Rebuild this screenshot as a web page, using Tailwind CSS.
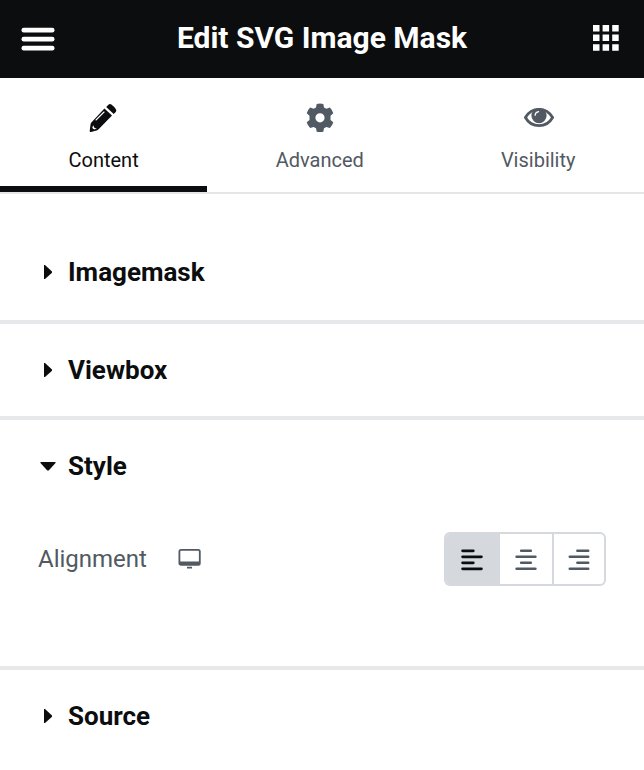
<!DOCTYPE html>
<html lang="en">
<head>
<meta charset="utf-8">
<meta name="viewport" content="width=device-width, initial-scale=1">
<title>Edit SVG Image Mask</title>
<script src="https://cdn.jsdelivr.net/npm/@tailwindcss/browser@4"></script>
</head>
<body class="bg-white font-[Roboto,sans-serif] text-[#0c0d0e]">
<header class="flex h-[78px] items-center justify-between bg-[#0c0d0e] px-5 text-white">
  <button type="button" aria-label="Menu" class="w-9">
    <svg class="block h-9 w-9" viewBox="0 0 36 36" fill="currentColor"><rect x="1.5" y="6.8" width="33" height="4.6" rx="2.2"/><rect x="1.5" y="15.8" width="33" height="4.6" rx="2.2"/><rect x="1.5" y="24.8" width="33" height="4.6" rx="2.2"/></svg>
  </button>
  <h1 class="pb-0.5 text-[30px] leading-9 font-bold">Edit SVG Image Mask</h1>
  <button type="button" aria-label="Widgets" class="w-9">
    <svg class="block h-9 w-9" viewBox="0 0 36 36" fill="currentColor"><path d="M5 4h6.5v6.5H5zM14.6 4h6.5v6.5h-6.5zM24.2 4h6.5v6.5h-6.5zM5 13.6h6.5v6.5H5zM14.6 13.6h6.5v6.5h-6.5zM24.2 13.6h6.5v6.5h-6.5zM5 23.2h6.5v6.5H5zM14.6 23.2h6.5v6.5h-6.5zM24.2 23.2h6.5v6.5h-6.5z"/></svg>
  </button>
</header>
<div role="tablist" class="flex h-[116px] border-b-2 border-[#e6e6e6] text-xl leading-6 text-[#515962]">
  <button type="button" role="tab" aria-selected="true" class="flex flex-auto flex-col items-center gap-3.5 border-b-6 border-[#0c0d0e] pt-6 text-[#0c0d0e]">
    <svg class="h-8 w-8" viewBox="0 0 32 32" fill="currentColor"><path d="M16.4 6.6 24 13.6 10.6 27.2Q9.8 28 8.6 28.5L3 30q-1.6.3-1.3-1.3L2.6 22q.2-1 1-1.8z"/><path d="m18.2 4.9 2.2-2.1q1.4-1.4 3-.2 2.6 2 4.5 4.6 1 1.5-.2 2.8l-2 2.1z"/><path d="M8 18 16 10" stroke="white" stroke-width="1.1" stroke-linecap="round"/><path d="m5.1 23.2-.8 2.7 1.8 1.6 2.8-.9-2.3-.7z" fill="white"/></svg>
    <span>Content</span>
  </button>
  <button type="button" role="tab" aria-selected="false" class="flex flex-auto flex-col items-center gap-3.5 border-b-6 border-transparent pt-6">
    <svg class="h-8 w-8" viewBox="0 0 32 32" fill="currentColor"><path fill-rule="evenodd" d="M12.7 1.9q3.3-.7 6.6 0l.7 3.5 2.3 1.3 3.6-1.2q2.4 2.5 3.4 5.8l-2.8 2.4v4.2l2.8 2.4q-1 3.3-3.4 5.8l-3.6-1.2-2.3 1.3-.7 3.5q-3.3.7-6.6 0L12 26.2l-2.3-1.3-3.6 1.2q-2.4-2.5-3.4-5.8l2.8-2.4v-4.2l-2.8-2.4q1-3.3 3.4-5.8l3.6 1.2L12 5.4zM16 11.2a4.6 4.6 0 1 0 0 9.2 4.6 4.6 0 0 0 0-9.2z"/></svg>
    <span>Advanced</span>
  </button>
  <button type="button" role="tab" aria-selected="false" class="flex flex-auto flex-col items-center gap-3.5 border-b-6 border-transparent pt-6">
    <svg class="h-8 w-8" viewBox="0 0 32 32"><path d="M3.4 15.5C6.5 10 11 7.3 17 7.3s10.5 2.7 13.6 8.2C27.5 21 23 23.7 17 23.7S6.5 21 3.4 15.5z" fill="none" stroke="currentColor" stroke-width="2.8" stroke-linejoin="round"/><circle cx="17" cy="13.6" r="7.6" fill="currentColor"/><path d="M13.1 13.3q.3-3.1 3.5-3.6" fill="none" stroke="white" stroke-width="1.2" stroke-linecap="round"/></svg>
    <span>Visibility</span>
  </button>
</div>
<main class="pt-[34px] text-[#0c0d0e]">
  <section class="border-b-4 border-[#e6e8ea]">
    <h2><button type="button" aria-expanded="false" class="flex h-[92px] w-full items-center gap-3 px-10 pb-1 text-left text-[26px] leading-8 font-bold"><svg class="h-4 w-4" viewBox="0 0 16 16" fill="currentColor"><path d="M4 1v14h1l7-6.3V7.4L5 1z"/></svg>Imagemask</button></h2>
  </section>
  <section class="border-b-4 border-[#e6e8ea]">
    <h2><button type="button" aria-expanded="false" class="flex h-[92px] w-full items-center gap-3 px-10 text-left text-[26px] leading-8 font-bold"><svg class="h-4 w-4" viewBox="0 0 16 16" fill="currentColor"><path d="M4 1v14h1l7-6.3V7.4L5 1z"/></svg>Viewbox</button></h2>
  </section>
  <section class="border-b-4 border-[#e6e8ea] pb-20">
    <h2><button type="button" aria-expanded="true" class="flex h-[92px] w-full items-center gap-3 px-10 text-left text-[26px] leading-8 font-bold"><svg class="h-4 w-4" viewBox="0 0 16 16" fill="currentColor"><path d="M.5 4h15v1L8.7 12.5H7.3L.5 5z"/></svg>Style</button></h2>
    <div class="flex items-center justify-between px-[38px] pt-5 text-[#515962]">
      <div class="flex items-center gap-[30px]">
        <span id="alignment-label" class="text-2xl leading-7">Alignment</span>
        <button type="button" aria-label="Desktop"><svg class="block h-6 w-6" viewBox="0 0 24 24"><rect x="2.4" y="2.8" width="20.4" height="15" rx="1.6" fill="none" stroke="currentColor" stroke-width="1.8"/><path d="M2 14.4h21v3.6H2zM10 19.8h5v1.6h-5z" fill="currentColor"/></svg></button>
      </div>
      <div role="radiogroup" aria-labelledby="alignment-label" class="flex h-[54px] overflow-hidden rounded-md border-2 border-[#d5d8dc]">
        <label class="flex w-[54px] cursor-pointer items-center justify-center bg-[#d5d8dc] pt-1 text-[#0c0d0e]">
          <input type="radio" name="alignment" value="left" checked aria-label="Left" class="sr-only">
          <svg class="h-6 w-6" viewBox="0 0 24 24" fill="none" stroke="currentColor" stroke-width="2.8" stroke-linecap="round"><path d="M1.6 1.8h10.7M1.6 7.8h18.8M1.6 13.8h10.7M1.6 19.8h18.8"/></svg>
        </label>
        <label class="flex w-[54px] cursor-pointer items-center justify-center border-r-2 border-[#d5d8dc] pt-1">
          <input type="radio" name="alignment" value="center" aria-label="Center" class="sr-only">
          <svg class="h-6 w-6" viewBox="0 0 24 24" fill="none" stroke="currentColor" stroke-width="2.6" stroke-linecap="round"><path d="M7.2 1.8h9.6M2.6 7.8h18.8M7.2 13.8h9.6M2.6 19.8h18.8"/></svg>
        </label>
        <label class="flex w-[50px] cursor-pointer items-center justify-center pt-1">
          <input type="radio" name="alignment" value="right" aria-label="Right" class="sr-only">
          <svg class="h-6 w-6" viewBox="0 0 24 24" fill="none" stroke="currentColor" stroke-width="2.6" stroke-linecap="round"><path d="M10.4 1.8h10.8M2.8 7.8h18.4M10.4 13.8h10.8M2.8 19.8h18.4"/></svg>
        </label>
      </div>
    </div>
  </section>
  <section>
    <h2><button type="button" aria-expanded="false" class="flex h-[92px] w-full items-center gap-3 px-10 text-left text-[26px] leading-8 font-bold"><svg class="h-4 w-4" viewBox="0 0 16 16" fill="currentColor"><path d="M4 1v14h1l7-6.3V7.4L5 1z"/></svg>Source</button></h2>
  </section>
</main>
</body>
</html>
